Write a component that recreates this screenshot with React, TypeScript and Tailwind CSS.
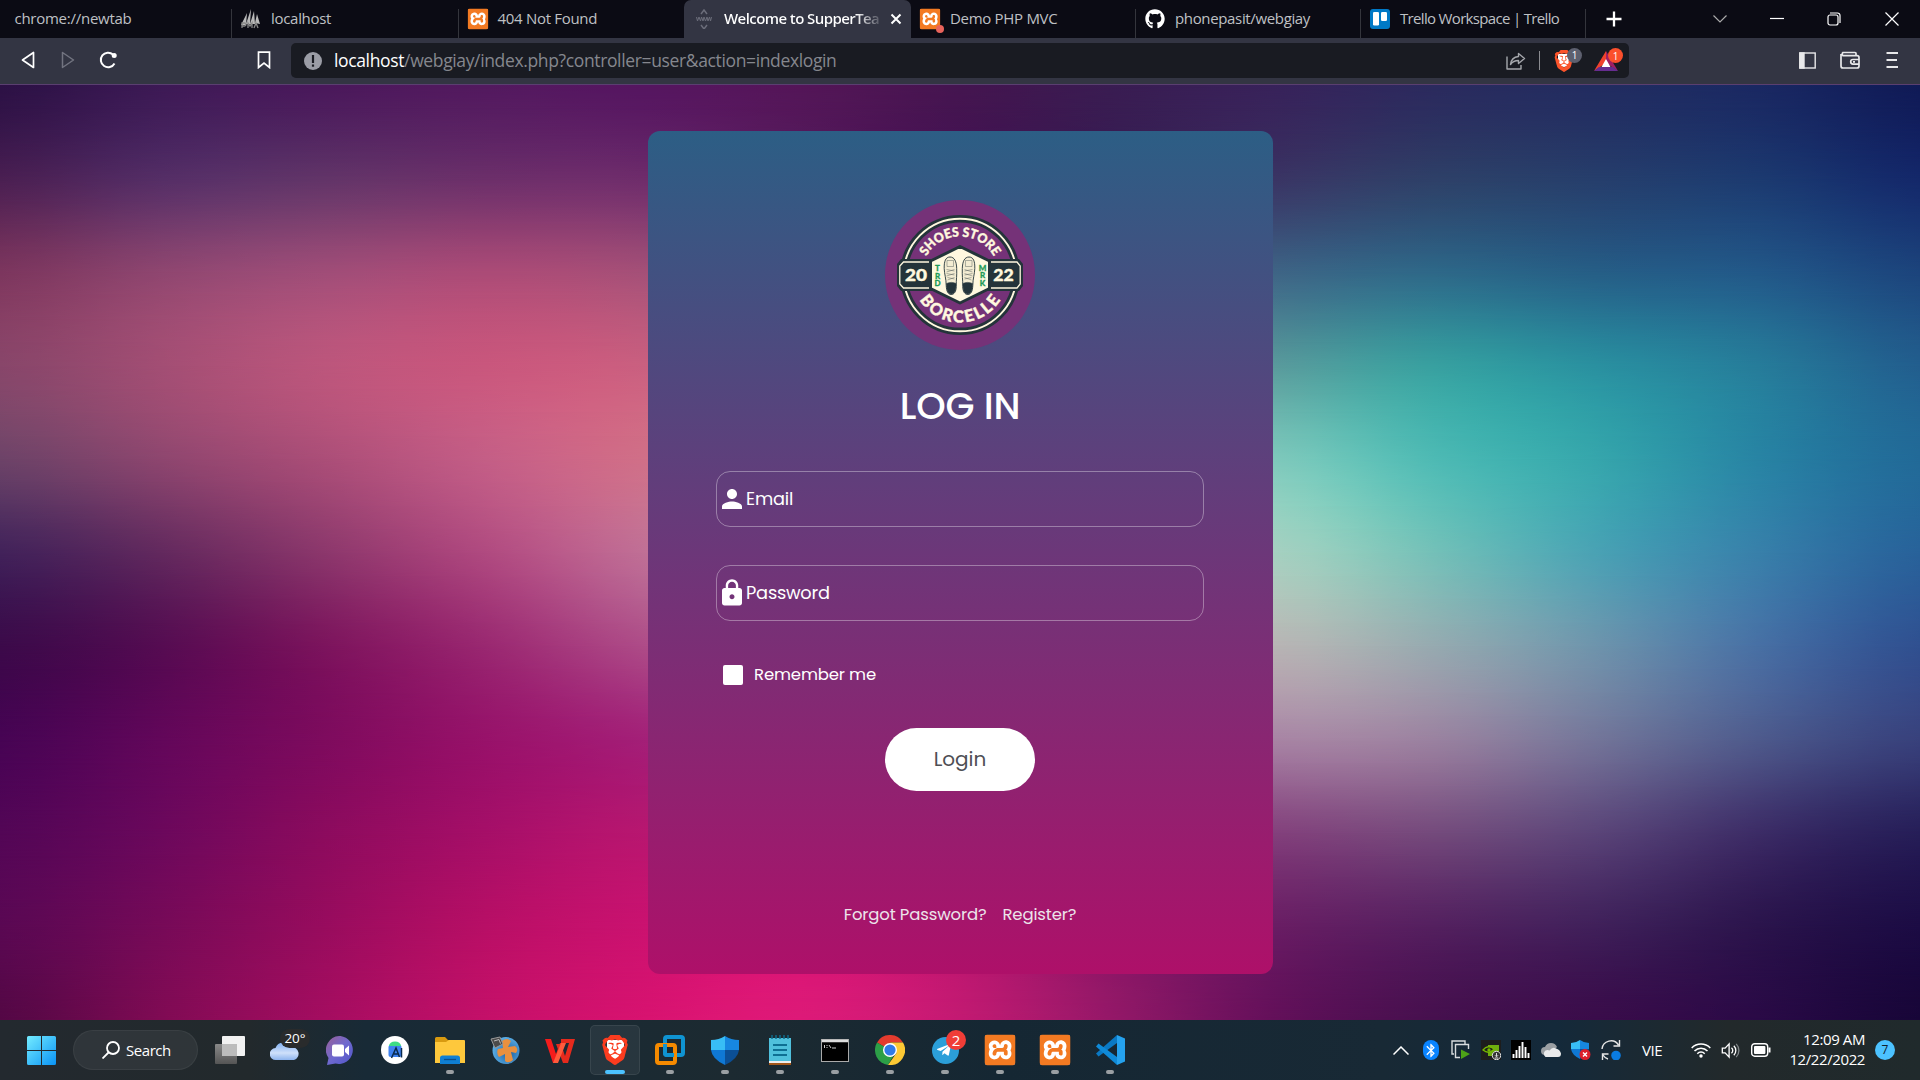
import React from "react";
import { MdPerson, MdLock, MdBluetooth } from "react-icons/md";
import { SiXampp, SiBrave } from "react-icons/si";
import { FaGithub, FaTelegramPlane } from "react-icons/fa";

/* Colour mesh of the wallpaper; rows and columns are smoothed with a cubic before drawing. */
const MESH_X = [0, 162, 324, 486, 648, 800, 960, 1110, 1272, 1434, 1596, 1758, 1920];
const MESH: (string | null)[][] = [
  ["#2c1145", "#3d1955", "#4a185b", "#53195f", "#551560", "#541658", "#451550", "#3a1c52", "#38225a", "#2b2a5e", "#222c60", "#1a2862", "#101a56"],
  ["#4a1f52", "#552e66", "#623468", "#6c2f6a", "#6e2c6b", "#5a2060", "#481a58", "#3a2458", "#3a3464", "#2e4068", "#263e6c", "#1c3a70", "#14286a"],
  ["#7c365e", "#8f4670", "#a04d78", "#ab4b77", "#a45078", null, null, null, "#3f6485", "#2e6888", "#265e86", "#225888", "#1c447c"],
  ["#88466a", "#a34e74", "#bc567c", "#c9577d", "#c96080", null, null, null, "#5a9a9c", "#38a0a0", "#2a90a0", "#267c9a", "#225e8e"],
  ["#6d4368", "#8e466f", "#ab4e78", "#c45e86", "#d07088", null, null, null, "#7fc8bb", "#4ebab4", "#36a6ac", "#2884a4", "#226a98"],
  ["#42225a", "#63295e", "#8c376c", "#b04a80", "#c07096", null, null, null, "#a6d0c0", "#74c0b8", "#4aa2b4", "#3880aa", "#28629a"],
  ["#3c0a4a", "#560c52", "#7c145d", "#9a2871", "#ae4c88", null, null, null, "#b8b4b4", "#96aab0", "#6e94ac", "#4870a4", "#305090"],
  ["#470454", "#63075a", "#7e0b5e", "#98126a", "#a42078", null, null, null, "#a884a4", "#9a82a0", "#737599", "#4e5a8c", "#38417c"],
  ["#530656", "#6c085c", "#8c0b5e", "#a60f68", "#b81770", null, null, null, "#83407c", "#744a7c", "#5a4478", "#3c2c66", "#261e58"],
  ["#5a0853", "#770a58", "#980c5e", "#b80f66", "#cb1270", "#d41574", "#b81870", "#8a1a68", "#6a1d64", "#54205f", "#40205a", "#2b144c", "#1c0c44"],
  ["#540845", "#800b54", "#a40d60", "#c41069", "#d81370", "#dd1a78", "#c31a72", "#951868", "#64105a", "#46104e", "#3a0c4a", "#2a0a46", "#180638"],
];

type Rgb = number[];

const toRgb = (hex: string): Rgb => [1, 3, 5].map((i) => parseInt(hex.slice(i, i + 2), 16));

const mix = (a: Rgb, b: Rgb, t: number): Rgb => a.map((v, i) => v + (b[i] - v) * t);

/* The centre columns have no colour of their own in most rows: bridge columns 4 and 8. */
const GRID: Rgb[][] = MESH.map((row) =>
  row.map((c, i) => (c ? toRgb(c) : mix(toRgb(row[4] as string), toRgb(row[8] as string), (i - 4) / 4))),
);

function subdivide<T>(items: T[], n: number, blend: (p: T[], t: number) => T): T[] {
  const out: T[] = [];
  const at = (i: number) => items[Math.min(items.length - 1, Math.max(0, i))];
  for (let i = 0; i < items.length - 1; i++) {
    for (let s = 0; s < n; s++) out.push(blend([at(i - 1), at(i), at(i + 1), at(i + 2)], s / n));
  }
  out.push(items[items.length - 1]);
  return out;
}

const cubic = (a: number, b: number, c: number, d: number, t: number) =>
  b + 0.5 * t * (c - a + t * (2 * a - 5 * b + 4 * c - d + t * (3 * (b - c) + d - a)));

const cubicRgb = (p: Rgb[], t: number): Rgb => [0, 1, 2].map((k) => cubic(p[0][k], p[1][k], p[2][k], p[3][k], t));

const FINE_X = subdivide(MESH_X, 4, (p, t) => p[1] + (p[2] - p[1]) * t);
const FINE = subdivide(
  GRID.map((row) => subdivide(row, 4, cubicRgb)),
  4,
  (p, t) => p[0].map((_, i) => cubicRgb([p[0][i], p[1][i], p[2][i], p[3][i]], t)),
);

function Wallpaper() {
  const last = FINE.length - 1;
  return (
    <div className="absolute inset-0">
      {FINE.map((row, k) => {
        const stops = row
          .map((c, i) => `rgb(${c.map((v) => Math.max(0, v).toFixed(1)).join(" ")}) ${((FINE_X[i] / 1920) * 100).toFixed(2)}%`)
          .join(", ");
        const mask =
          k === 0
            ? undefined
            : `linear-gradient(to bottom, transparent ${((k - 1) / last) * 100}%, #000 ${(k / last) * 100}%)`;
        return (
          <div
            key={k}
            className="absolute inset-0"
            style={{ backgroundImage: `linear-gradient(to right, ${stops})`, maskImage: mask }}
          />
        );
      })}
    </div>
  );
}

function XamppIcon({ className }: { className: string }) {
  return (
    <span className={"flex items-center justify-center rounded-[2px] bg-white " + className}>
      <SiXampp className="size-full scale-[1.04] text-[#f37a22]" />
    </span>
  );
}

function Tab({ icon, wide, children }: { icon?: React.ReactNode; wide?: boolean; children: React.ReactNode }) {
  return (
    <div className={"flex h-[29px] shrink-0 items-start border-r border-[#34353c] pl-[9px] " + (wide ? "w-[226.5px]" : "w-[225px]")}>
      {icon && <span className="relative mr-[10px] flex size-5 shrink-0 items-center justify-center">{icon}</span>}
      <span className="-mt-px whitespace-nowrap text-[15px] leading-5 text-[#bfc0c4]">{children}</span>
    </div>
  );
}

function TabStrip() {
  return (
    <div className="flex h-[38px] items-end bg-[#0b0b14] pl-[5.5px]">
      <Tab wide><span className="tracking-[-0.26px]">chrome://newtab</span></Tab>
      <Tab
        wide
        icon={
          <svg viewBox="0 0 20 20" className="size-5" fill="#b9b9b9">
            <path d="M0 16 6 4 5 16ZM5 15 10 0l-1 15ZM9 15 13 2l1 13ZM14 14l2-9 3 10Z" />
            <path d="M1 19v-5h2.500a1.500 1.500 0 0 1 0 3H1M7 19v-5l2 3 2-3v5M13 19l2-5 2 5" fill="none" stroke="#888" strokeWidth="1.300" />
          </svg>
        }
      >
        <span className="tracking-[-0.3px]">localhost</span>
      </Tab>
      <div className="flex h-[29px] w-[225.5px] shrink-0 items-start pl-[9px]">
        <XamppIcon className="mr-[10px] size-5" />
        <span className="-mt-px whitespace-nowrap text-[15px] leading-5 tracking-[-0.3px] text-[#bfc0c4]">404 Not Found</span>
      </div>
      <div className="flex h-[38px] w-[227px] shrink-0 items-start rounded-t-[7px] bg-[#333543] pl-[10px] pt-[9px]">
        <svg viewBox="0 0 20 20" className="mr-[10px] size-5 shrink-0" fill="none" stroke="#6b6d7a" strokeWidth="1.500">
          <path d="m7 5 3-4 3 4M7 16l3 4 3-4" />
          <path d="m2.500 8 1 4 1.500-4 1.500 4 1-4 1.500 4 1-4 1.500 4 1.500-4 1 4 1.500-4 1 4 1-4" strokeWidth="1" />
        </svg>
        <span className="-mt-px w-[157px] whitespace-nowrap bg-[linear-gradient(to_right,#fff_84%,#4a4c59_100%)] bg-clip-text text-[15px] font-semibold leading-5 tracking-[-0.58px] text-transparent">
          Welcome to SupperTea
        </span>
        <svg viewBox="0 0 12 12" className="ml-[9px] mt-[4px] size-3 shrink-0" stroke="#fff" strokeWidth="2">
          <path d="m1.500 1.500 9 9M10.500 1.500l-9 9" />
        </svg>
      </div>
      <Tab
        icon={
          <>
            <XamppIcon className="size-5" />
            <span className="absolute -bottom-1 -right-1 size-2 rounded-full bg-[#e9635b]" />
          </>
        }
      >
        <span className="tracking-[-0.3px]">Demo PHP MVC</span>
      </Tab>
      <Tab icon={<FaGithub className="size-5 text-white" />}>
        <span className="tracking-[-0.35px]">phonepasit/webgiay</span>
      </Tab>
      <Tab
        icon={
          <svg viewBox="0 0 20 20" className="size-5">
            <rect width="20" height="20" rx="3" fill="#0079c6" />
            <rect x="3" y="3" width="6" height="13.500" rx="1.300" fill="#fff" />
            <rect x="11" y="3" width="6" height="9" rx="1.300" fill="#fff" />
          </svg>
        }
      >
        <span className="tracking-[-0.67px]">Trello Workspace | Trello</span>
      </Tab>
      <div className="flex h-[38px] flex-1 items-center text-white">
        <svg viewBox="0 0 16 16" className="ml-[20px] size-4" stroke="currentColor" strokeWidth="2.300">
          <path d="M8 .5v15M.5 8h15" />
        </svg>
        <svg viewBox="0 0 14 8" className="ml-[91px] h-2 w-[14px]" fill="none" stroke="#aaa" strokeWidth="1.200">
          <path d="m.5.500 6.500 6.500 6.500-6.500" />
        </svg>
        <svg viewBox="0 0 14 14" className="ml-[43px] size-[14px]" stroke="currentColor" strokeWidth="1.200">
          <path d="M0 6.500h14" />
        </svg>
        <svg viewBox="0 0 14 14" className="ml-[43px] size-[14px]" fill="none" stroke="currentColor" strokeWidth="1.200">
          <rect x="1" y="3" width="10" height="10" rx="2" />
          <path d="M3 1h7.500a2.500 2.500 0 0 1 2.500 2.500V11" />
        </svg>
        <svg viewBox="0 0 14 14" className="ml-[44px] size-[14px]" stroke="currentColor" strokeWidth="1.200">
          <path d="m.5.500 13 13M13.500.500l-13 13" />
        </svg>
      </div>
    </div>
  );
}

function Toolbar() {
  return (
    <div className="flex h-[46px] items-start bg-[#333543]">
      <div className="flex h-[44px] w-[291px] items-center pl-[21px] text-white">
        <svg viewBox="0 0 14 18" className="h-[18px] w-[14px]" fill="none" stroke="currentColor" strokeWidth="1.700" strokeLinejoin="round">
          <path d="M12.500 1.500v15L1.500 9Z" />
        </svg>
        <svg viewBox="0 0 14 18" className="ml-[26px] h-[18px] w-[14px]" fill="none" stroke="#727480" strokeWidth="1.500" strokeLinejoin="round">
          <path d="M1.500 1.500v15L12.500 9Z" />
        </svg>
        <svg viewBox="0 0 18 18" className="ml-[24px] size-[18px]" fill="none" stroke="currentColor" strokeWidth="2">
          <path d="M15.500 12.500A7.300 7.300 0 1 1 14 3.500" />
          <circle cx="15.200" cy="4.500" r="2.500" fill="currentColor" stroke="none" />
        </svg>
        <svg viewBox="0 0 14 18" className="ml-[140px] h-[18px] w-[14px]" fill="none" stroke="currentColor" strokeWidth="1.700">
          <path d="M1.500 1.200h11v15.300L7 12l-5.500 4.500Z" />
        </svg>
      </div>
      <div className="mt-[5px] flex h-[35px] w-[1338px] items-center rounded-[5px] bg-[#191b22] pl-[13px]">
        <span className="flex size-[18px] items-center justify-center rounded-full bg-[#9b9da6]">
          <svg viewBox="0 0 4 12" className="h-3 w-1" fill="#191b22">
            <rect x=".9" width="2.200" height="8" />
            <rect x=".9" y="9.500" width="2.200" height="2.200" />
          </svg>
        </span>
        <span className="-mt-px ml-[12px] whitespace-nowrap text-[17.500px] leading-6 tracking-[-0.36px] text-[#85878e]">
          <span className="text-white">localhost</span>/webgiay/index.php?controller=user&amp;action=indexlogin
        </span>
        <div className="ml-auto flex items-center pr-[4px]">
          <svg viewBox="0 0 20 18" className="h-[18px] w-5" fill="none" stroke="#a5a7ac" strokeWidth="1.400" strokeLinejoin="round">
            <path d="M1 4.500v12.500h14v-4M12.500 1.500l6 5-6 5V8.500c-4 0-6 1-8 4 .5-4.500 3-7.500 8-8Z" />
          </svg>
          <span className="ml-[13px] h-[19px] w-px bg-[#8a8b90]" />
          <span className="relative ml-[13px] flex size-[22px] items-center justify-center">
            <span className="absolute top-[4px] h-[13px] w-3 rounded-b-[6px] bg-white" />
            <SiBrave className="relative size-[22px] text-[#fb542b]" />
            <span className="absolute -right-[7px] -top-[2px] flex h-[15px] w-[15px] items-center justify-center rounded-full bg-[#5d606f] text-[10px] leading-none text-white">1</span>
          </span>
          <span className="relative ml-[19px] flex h-[21px] w-6 items-center justify-center">
            <svg viewBox="0 0 24 20" className="h-5 w-6">
              <path d="M12 0 0 20l12-8Z" fill="#f0422d" />
              <path d="M12 0 24 20l-12-8Z" fill="#9e1f63" />
              <path d="M0 20h24l-5-4H5Z" fill="#662d91" />
              <path d="m12 8 4.500 8h-9Z" fill="#fff" />
            </svg>
            <span className="absolute -right-[5px] -top-[2px] flex h-[15px] w-[15px] items-center justify-center rounded-full bg-[#fb4f2c] text-[10px] leading-none text-white">1</span>
          </span>
          <span className="w-[7px]" />
        </div>
      </div>
      <div className="flex h-[44px] flex-1 items-center pl-[170px] text-[#e8e8ea]">
        <svg viewBox="0 0 17 17" className="size-[17px]" fill="none" stroke="currentColor" strokeWidth="1.400">
          <rect x=".8" y="1" width="15.400" height="15" />
          <path d="M1 1h4v15H1Z" fill="currentColor" />
        </svg>
        <svg viewBox="0 0 20 18" className="ml-[24px] h-[18px] w-5" fill="none" stroke="currentColor" strokeWidth="1.700">
          <path d="M16 4.500V2.500a1 1 0 0 0-1-1H3a2 2 0 0 0 0 3.200h14a2 2 0 0 1 2 2V15a2 2 0 0 1-2 2H3a2 2 0 0 1-2-2V3" />
          <path d="M19 8.500h-6a2.300 2.300 0 0 0 0 4.600h6M13 10.800h2" />
        </svg>
        <svg viewBox="0 0 12 18" className="ml-[26px] h-[18px] w-3" stroke="currentColor" strokeWidth="2">
          <path d="M.5 2H12M.5 9H11M.5 16H12" />
        </svg>
      </div>
    </div>
  );
}

function Shoe({ x }: { x: number }) {
  return (
    <g transform={`translate(${x} 56.500)`} stroke="#24343a" fill="none">
      <path d="M6.500.500C2 .5.500 5 .7 12c.2 6 2 10 2 17 .3 6 2 9 5 9s5-3 5-8c0-7 .8-11 .5-18C13 5 11 .5 6.500.500Z" fill="#f3ecd2" strokeWidth=".9" />
      <path d="M3 27c3-1.500 7-1.500 9.500 0 .2 6-1 10.500-4.700 10.500S3 33 3 27Z" fill="#24343a" strokeWidth=".5" />
      <path d="M3.500 4h6.500v6H3.500ZM3 13l8 1.500M11 13l-8 2.500M3 17l8 1.500M11 17l-8 2.500M4 21l7 1.500M11 21l-7 2.500" strokeWidth=".55" opacity=".65" />
    </g>
  );
}

function StoreLogo() {
  return (
    <svg viewBox="0 0 150 150" className="size-[150px]" fontFamily="Lato, sans-serif" fontWeight="900">
      <defs>
        <path id="arc-top" d="M36.500 75a38.500 38.500 0 0 1 77 0" />
        <path id="arc-bottom" d="M27.500 75a47.500 47.500 0 0 0 95 0" />
      </defs>
      <circle cx="75" cy="75" r="75" fill="#753278" />
      <circle cx="75" cy="75" r="56.300" fill="none" stroke="#24343a" strokeWidth="7.500" />
      <circle cx="75" cy="75" r="56.300" fill="none" stroke="#fff8df" strokeWidth="1.900" />
      <path d="M16 59h118l4 5v22l-4 5H16l-4-5V64Z" fill="#24343a" />
      <path d="M18.500 62H132l3.200 4v18l-3.200 4H18.500l-3.700-4V66Z" fill="none" stroke="#fff8df" strokeWidth="1.300" />
      <path d="M75 46.500 104.500 61v27.500L75 103 45.500 88.500V61Z" fill="#fff8df" stroke="#24343a" strokeWidth="3" strokeLinejoin="round" />
      <g fill="#fff8df" stroke="#fff8df" strokeWidth=".4" textAnchor="middle">
        <text fontSize="13">
          <textPath href="#arc-top" startOffset="50%" textLength="82" lengthAdjust="spacingAndGlyphs">SHOES STORE</textPath>
        </text>
        <text fontSize="16.500">
          <textPath href="#arc-bottom" startOffset="50%" textLength="97" lengthAdjust="spacing">BORCELLE</textPath>
        </text>
        <text x="31" y="81" fontSize="17" textLength="22" lengthAdjust="spacingAndGlyphs">20</text>
        <text x="118.500" y="81" fontSize="17" textLength="20.500" lengthAdjust="spacingAndGlyphs">22</text>
      </g>
      <g fill="#1f9a58" stroke="#1f9a58" strokeWidth=".3" fontSize="8" textAnchor="middle">
        <text x="52.500" y="71">T</text>
        <text x="52.500" y="78.500">R</text>
        <text x="52.500" y="86">D</text>
        <text x="97.500" y="70.500">M</text>
        <text x="97.500" y="78">R</text>
        <text x="97.500" y="85.500">K</text>
      </g>
      <Shoe x={58.5} />
      <g transform="translate(150 0) scale(-1 1)">
        <Shoe x={59.5} />
      </g>
    </svg>
  );
}

function Field({ icon, label }: { icon: React.ReactNode; label: React.ReactNode }) {
  return (
    <div className="flex h-[56px] w-[488px] items-center rounded-[14px] border border-white/35 text-white">
      {icon}
      {label}
    </div>
  );
}

function LoginCard() {
  return (
    <div className="relative mx-auto mt-[46px] flex h-[843px] w-[625px] flex-col items-center rounded-[12px] bg-[linear-gradient(to_bottom,#2c5e85,#6c3779_50%,#ae1069)] font-['Poppins','Inter',sans-serif]">
      <div className="mt-[69px]">
        <StoreLogo />
      </div>
      <h1 className="mt-[32px] text-[37.5px] font-medium leading-[48px] tracking-[-0.2px] text-white">LOG IN</h1>
      <div className="mt-[41px] flex flex-col gap-[38px]">
        <Field icon={<MdPerson className="size-[30px] shrink-0" />} label={<span className="-ml-px mt-px text-[17.75px] tracking-[-0.2px]">Email</span>} />
        <Field icon={<MdLock className="-mt-px size-[30px] shrink-0" />} label={<span className="-ml-px mt-px text-[17.75px] tracking-[-0.2px]">Password</span>} />
      </div>
      <div className="mt-[43px] flex h-[22px] w-[488px] items-center pl-[7px] text-white">
        <span className="size-5 rounded-[2px] bg-white" />
        <span className="ml-[11px] text-[16.5px] tracking-[-0.15px]">Remember me</span>
      </div>
      <div className="mt-[42px] flex h-[63px] w-[150px] items-center justify-center rounded-full bg-white text-[20px] text-[#4f4f55]">
        <span className="-mt-px">Login</span>
      </div>
      <div className="mt-[112px] flex h-6 items-center gap-[16px] text-[16.5px] tracking-[-0.15px] text-[#ece3ea]">
        <span>Forgot Password?</span>
        <span>Register?</span>
      </div>
    </div>
  );
}

function TaskbarApp({ children, running = true, active = false }: { children: React.ReactNode; running?: boolean; active?: boolean }) {
  return (
    <div className="flex h-[60px] w-[55px] shrink-0 items-center justify-center">
      <div className={active ? "relative flex size-[50px] items-center justify-center rounded-[5px] border border-white/8 bg-white/6" : "relative flex size-[50px] items-center justify-center"}>
        {children}
        {running && (
          <span className={active ? "absolute bottom-0 h-1 w-5 rounded-full bg-[#4cc2ff]" : "absolute bottom-px h-1 w-2 rounded-full bg-[#9a9fa3]"} />
        )}
      </div>
    </div>
  );
}

function Taskbar() {
  return (
    <div className="flex h-[60px] items-center bg-[linear-gradient(to_right,#23292f_0%,#22292c_13%,#182a36_19%,#1c2a31_38%,#152733_52%,#182935_72%,#14293a_81%,#22292b_90%,#202a2c_100%)] text-white">
      <svg viewBox="0 0 29 29" className="ml-[27px] size-[29px] shrink-0">
        <defs>
          <linearGradient id="win" x1="0" y1="0" x2="1" y2="1">
            <stop offset="0" stopColor="#74ecff" />
            <stop offset="1" stopColor="#0a93f5" />
          </linearGradient>
        </defs>
        <path d="M0 1.500Q0 0 1.500 0H14v14H0ZM15 0h12.500Q29 0 29 1.500V14H15ZM0 15h14v14H1.500Q0 29 0 27.500ZM15 15h14v12.500q0 1.500-1.500 1.500H15Z" fill="url(#win)" />
      </svg>
      <div className="ml-[17px] flex h-10 w-[125px] shrink-0 items-center rounded-full border border-white/5 bg-white/6 pl-[28px]">
        <svg viewBox="0 0 18 18" className="size-[18px]" fill="none" stroke="#fff" strokeWidth="1.800">
          <circle cx="11" cy="7" r="6" />
          <path d="m6.500 11.500-6 6" />
        </svg>
        <span className="ml-[6px] text-[15px] tracking-[-0.45px]">Search</span>
      </div>
      <div className="ml-[4.500px] flex">
        <TaskbarApp running={false}>
          <svg viewBox="0 0 30 28" className="h-7 w-[30px]">
            <defs>
              <linearGradient id="tv" x1="0" y1="0" x2="0" y2="1"><stop offset="0" stopColor="#888" /><stop offset="1" stopColor="#555" /></linearGradient>
            </defs>
            <rect x="0" y="8" width="22" height="20" rx="1" fill="url(#tv)" />
            <rect x="7" y="0" width="23" height="20" rx="1" fill="#f2f2f2" />
            <rect x="7" y="8" width="15" height="12" fill="#bcbcbc" />
          </svg>
        </TaskbarApp>
        <TaskbarApp running={false}>
          <svg viewBox="0 0 30 20" className="mt-[2px] h-5 w-[30px]">
            <defs>
              <linearGradient id="cl" x1="0" y1="0" x2="0" y2="1"><stop offset="0" stopColor="#7fb0f2" /><stop offset=".6" stopColor="#cfe0fa" /><stop offset="1" stopColor="#8db4ee" /></linearGradient>
            </defs>
            <path d="M6 19a6 6 0 0 1-.5-12A8.500 8.500 0 0 1 21 6a6.700 6.700 0 0 1 3 13Z" fill="url(#cl)" />
          </svg>
          <span className="absolute right-0 top-[4px] flex h-[19px] w-[30px] items-center justify-center rounded-full bg-[#292b2c] text-[13.500px] leading-none">20°</span>
        </TaskbarApp>
        <TaskbarApp running={false}>
          <svg viewBox="0 0 29 29" className="size-[29px]">
            <defs>
              <linearGradient id="ch" x1="0" y1="0" x2="1" y2="1"><stop offset="0" stopColor="#9a5f96" /><stop offset=".5" stopColor="#6f69cf" /><stop offset="1" stopColor="#4f55c9" /></linearGradient>
            </defs>
            <path d="M14.500 0a14 14 0 1 1-5 27.500L1 29l1.500-7A14 14 0 0 1 14.500 0Z" fill="url(#ch)" />
            <rect x="6" y="8.500" width="12" height="12" rx="2" fill="#fff" />
            <path d="m19 13 4-3.500v10L19 16Z" fill="#fff" />
          </svg>
        </TaskbarApp>
        <TaskbarApp running={false}>
          <svg viewBox="0 0 28 28" className="size-7">
            <circle cx="14" cy="14" r="14" fill="#fff" />
            <rect x="7.500" y="9" width="13" height="12" rx="2" fill="#3f82f0" />
            <path d="M8 10a6 4.500 0 0 1 12 0Z" fill="#3ddc84" />
            <path d="m10.500 22 4.500-10 3.500 9M13 18h4M20.500 12v9.500" fill="none" stroke="#0a2a4c" strokeWidth="1.500" />
          </svg>
        </TaskbarApp>
        <TaskbarApp>
          <svg viewBox="0 0 30 27" className="h-[27px] w-[30px]">
            <path d="M0 1.500Q0 0 1.500 0H10l3 3h15v8H0Z" fill="#d89a10" />
            <path d="M0 5h11l3-2h15q1 0 1 1v22H0Z" fill="#fec83c" />
            <path d="M5 27v-6q0-2.500 2.500-2.500h15Q25 18.500 25 21v6Z" fill="#0f7fd4" />
            <path d="M9 22.500h12" stroke="#0a4d8c" strokeWidth="1.300" />
          </svg>
        </TaskbarApp>
        <TaskbarApp running={false}>
          <svg viewBox="0 0 30 30" className="size-[30px]">
            <defs>
              <radialGradient id="globe" cx=".6" cy=".6" r=".6"><stop offset="0" stopColor="#1c5fa0" /><stop offset="1" stopColor="#5aaee6" /></radialGradient>
            </defs>
            <circle cx="16" cy="15.500" r="13.500" fill="url(#globe)" />
            <path d="M12 6q5-4 9 0l-3 6 7-1q4 3 1 7l-5-1 2 8q-5 4-8 1v-7l-6 3q-3-4-1-8l5-1Z" fill="#e9903e" />
            <path d="m1 4 9-2 3 7-8 4Z" fill="#4b4b4b" stroke="#999" />
            <path d="m4 6 5-1.500 1.500 4" fill="none" stroke="#bbb" />
          </svg>
        </TaskbarApp>
        <TaskbarApp running={false}>
          <svg viewBox="0 0 30 25" className="mt-[2px] h-[25px] w-[30px]">
            <path d="M0 0h6l5 15 4-11h5l-8 20H8Z" fill="#f51c1c" />
            <path d="M11 5h5l4 12 4-13h-8V0h14l-7 24h-5Z" fill="#e52a1d" />
            <path d="M16 4h5l-8 20H8Z" fill="#ff5a3c" />
          </svg>
        </TaskbarApp>
        <TaskbarApp active>
          <span className="absolute top-[14px] h-[19px] w-[17px] rounded-b-[8px] bg-white" />
          <SiBrave className="relative size-[30px] text-[#fb3c1f]" />
        </TaskbarApp>
        <TaskbarApp>
          <svg viewBox="0 0 30 30" className="size-[30px]" fill="none" strokeWidth="4">
            <rect x="10" y="2" width="18" height="18" rx="2" stroke="#0f94d2" />
            <rect x="2" y="10" width="18" height="18" rx="2" stroke="#f58a00" />
            <path d="M10 9v9q0 2 2 2h7" stroke="#0f94d2" />
          </svg>
        </TaskbarApp>
        <TaskbarApp>
          <svg viewBox="0 0 28 29" className="h-[29px] w-7">
            <path d="M14 0q6 4 14 4v10H14Z" fill="#1787e0" />
            <path d="M14 0Q8 4 0 4v10h14Z" fill="#38bdf5" />
            <path d="M0 14h14v15Q1 23 0 14Z" fill="#0f78d4" />
            <path d="M28 14H14v15q13-6 14-15Z" fill="#0b4f96" />
          </svg>
        </TaskbarApp>
        <TaskbarApp>
          <svg viewBox="0 0 22 30" className="h-[30px] w-[22px]">
            <rect y="3" width="22" height="24" fill="#4fc0dc" />
            <path d="M0 26h22v2H0Z" fill="#eee" />
            <path d="M0 28h22v2H0Z" fill="#a2571a" />
            <path d="M3 0v4M7 0v4M11 0v4M15 0v4M19 0v4" stroke="#0f6a88" strokeWidth="1.500" />
            <path d="M4 10h14M4 15h14M4 20h14" stroke="#0e6f93" strokeWidth="1.800" />
          </svg>
        </TaskbarApp>
        <TaskbarApp>
          <svg viewBox="0 0 28 23" className="h-[23px] w-7">
            <rect x=".5" y=".5" width="27" height="22" fill="#000" stroke="#aaa" />
            <path d="M1 2h26" stroke="#ddd" strokeWidth="2.500" />
            <path d="M3.500 6v3M6 6v1M6 8v1M8 6l2 3M11 9h4" stroke="#ccc" strokeWidth="1" />
          </svg>
        </TaskbarApp>
        <TaskbarApp>
          <svg viewBox="0 0 30 30" className="size-[30px]">
            <path d="M15 15 2 7.500A15 15 0 0 1 28 7.500H15Z" fill="#e33b2e" />
            <path d="M15 15 2 7.500a15 15 0 0 0 11 22.400l6.500-11Z" fill="#2c9f47" />
            <path d="M15 7.500h13a15 15 0 0 1-15 22.400L21.500 18Z" fill="#fcc934" />
            <circle cx="15" cy="15" r="7" fill="#fff" />
            <circle cx="15" cy="15" r="5.600" fill="#2f7be8" />
          </svg>
        </TaskbarApp>
        <TaskbarApp>
          <span className="flex size-[27px] items-center justify-center rounded-full bg-[#2b9fd9]">
            <FaTelegramPlane className="-ml-[2px] size-4" />
          </span>
          <span className="absolute right-[4px] top-[5px] flex size-5 items-center justify-center rounded-full bg-[#f03d37] text-[15px] leading-none">2</span>
        </TaskbarApp>
        <TaskbarApp><XamppIcon className="size-[30px]" /></TaskbarApp>
        <TaskbarApp><XamppIcon className="size-[30px]" /></TaskbarApp>
        <TaskbarApp>
          <svg viewBox="0 0 30 30" className="size-[30px]">
            <path d="m22 0 8 3.500v23L22 30Z" fill="#25a2ee" />
            <path d="M22 0 1 18.500l2.500 3L22 8Z" fill="#0a79c4" />
            <path d="M22 30 1 11.500l2.500-3L22 22Z" fill="#0f8ad8" />
          </svg>
        </TaskbarApp>
      </div>

      <div className="ml-[248.500px] flex items-center">
        <span className="flex w-[30px] justify-center">
          <svg viewBox="0 0 16 9" className="h-[9px] w-4" fill="none" stroke="#fff" strokeWidth="1.500"><path d="m.5 8.500 7.500-7.500 7.500 7.500" /></svg>
        </span>
        <span className="flex w-[30px] justify-center">
          <span className="flex h-5 w-4 items-center justify-center rounded-[8px] bg-[#0a84ff]"><MdBluetooth className="size-[17px]" /></span>
        </span>
        <span className="flex w-[30px] justify-center">
          <svg viewBox="0 0 20 20" className="size-5" fill="none" stroke="#d8dcde" strokeWidth="1.400">
            <path d="M3 14H1V1h13v3M9 17.500H4.500v-13h13V9" />
            <path d="m10 9.500 9 4.500-9 5Z" fill="#4da318" stroke="none" />
          </svg>
        </span>
        <span className="flex w-[30px] justify-center">
          <svg viewBox="0 0 20 20" className="size-5">
            <rect width="20" height="20" fill="#1d1d1d" />
            <path d="M7 5h11v11H7Z" fill="#6fae10" />
            <path d="M2 10q5-6 11-1-5 6-11 1Z" fill="#1d1d1d" stroke="#76b900" strokeWidth="1.300" />
            <circle cx="8" cy="10" r="1.700" fill="#76b900" />
            <circle cx="15.500" cy="15.500" r="4.200" fill="#333" stroke="#ddd" />
            <path d="M15.500 13v3.500M14 15.300l1.500 1.500 1.500-1.500M13.800 18h3.400" stroke="#ddd" fill="none" />
          </svg>
        </span>
        <span className="flex w-[30px] justify-center">
          <svg viewBox="0 0 20 20" className="size-5">
            <rect width="20" height="20" fill="#000" />
            <path d="M2.500 18v-4M5.500 18V10M8.500 18V6M11.500 18V2M14.500 18V7M17.500 18v-5" stroke="#fff" strokeWidth="1.900" />
          </svg>
        </span>
        <span className="flex w-[30px] justify-center">
          <svg viewBox="0 0 20 14" className="h-[14px] w-5">
            <path d="M4 12a4 4 0 0 1 0-8 6.500 6.500 0 0 1 12 0l-8 8Z" fill="#9b9fa3" />
            <path d="M4.500 14a4 4 0 0 1 0-6.500q2-1 4 0 3-4 6.500-2 4 1 5 5 0 3.500-3 3.500Z" fill="#e9eaeb" />
          </svg>
        </span>
        <span className="flex w-[30px] justify-center">
          <svg viewBox="0 0 20 20" className="size-5">
            <path d="M9 0q4 3 9 3v6H9Z" fill="#1787e0" />
            <path d="M9 0Q5 3 0 3v6h9Z" fill="#38bdf5" />
            <path d="M0 9h9v10Q1 15 0 9Z" fill="#0f78d4" />
            <path d="M18 9H9v10q8-4 9-10Z" fill="#0b4f96" />
            <circle cx="14" cy="14.500" r="5.500" fill="#dc1f2a" />
            <path d="m12 12.500 4 4m0-4-4 4" stroke="#fff" strokeWidth="1.400" />
          </svg>
        </span>
        <span className="flex w-[30px] justify-center">
          <svg viewBox="0 0 20 20" className="size-5" fill="none" stroke="#e6e6e6" strokeWidth="1.400">
            <path d="M1 9A9 9 0 0 1 17.500 5M18.500 0v6h-6M7 19a9 9 0 0 1-5-4M1.500 20v-6h6" />
            <circle cx="15" cy="15.500" r="4.800" fill="#0a7be0" stroke="none" />
          </svg>
        </span>
      </div>
      <span className="ml-[16px] w-[23px] text-[15px] tracking-[-0.5px]">VIE</span>
      <svg viewBox="0 0 20 16" className="ml-[26px] h-4 w-5 shrink-0" fill="none" stroke="#fff" strokeWidth="1.500">
        <path d="M.7 6a13 13 0 0 1 18.600 0M3.500 9a9 9 0 0 1 13 0M6.300 11.700a5 5 0 0 1 7.400 0" />
        <circle cx="10" cy="14" r="1.700" fill="#fff" stroke="none" />
      </svg>
      <svg viewBox="0 0 20 18" className="ml-[10px] h-[17px] w-5 shrink-0" fill="none" stroke="#fff" strokeWidth="1.400">
        <path d="M.8 6.500h3L8 2v14l-4.200-4.500h-3ZM10.500 6a4 4 0 0 1 0 6M13 4a7 7 0 0 1 0 10" />
        <path d="M15.500 2a10 10 0 0 1 0 14" stroke="#7f8587" />
      </svg>
      <svg viewBox="0 0 20 14" className="ml-[10px] h-[14px] w-5 shrink-0" fill="none" stroke="#fff" strokeWidth="1.400">
        <rect x=".7" y=".7" width="16" height="12.500" rx="3" />
        <rect x="3" y="3" width="11.400" height="8" rx="1" fill="#fff" stroke="none" />
        <path d="M18.500 4.500v5" strokeWidth="2" />
      </svg>
      <div className="-mt-[2px] flex w-[94px] flex-col items-end text-[15px] leading-5">
        <span className="tracking-[-0.4px]">12:09 AM</span>
        <span className="tracking-[-0.4px]">12/22/2022</span>
      </div>
      <span className="ml-[10px] flex size-5 items-center justify-center rounded-full bg-[#4cc2ff] text-[12px] text-[#10202c]">7</span>
    </div>
  );
}

export default function App() {
  return (
    <div className="flex h-[1080px] w-[1920px] flex-col overflow-hidden font-['Open_Sans','Noto_Sans',sans-serif]">
      <TabStrip />
      <Toolbar />
      <main className="relative h-[936px] shrink-0 border-t border-[#5a3f70]">
        <Wallpaper />
        <LoginCard />
      </main>
      <Taskbar />
    </div>
  );
}
